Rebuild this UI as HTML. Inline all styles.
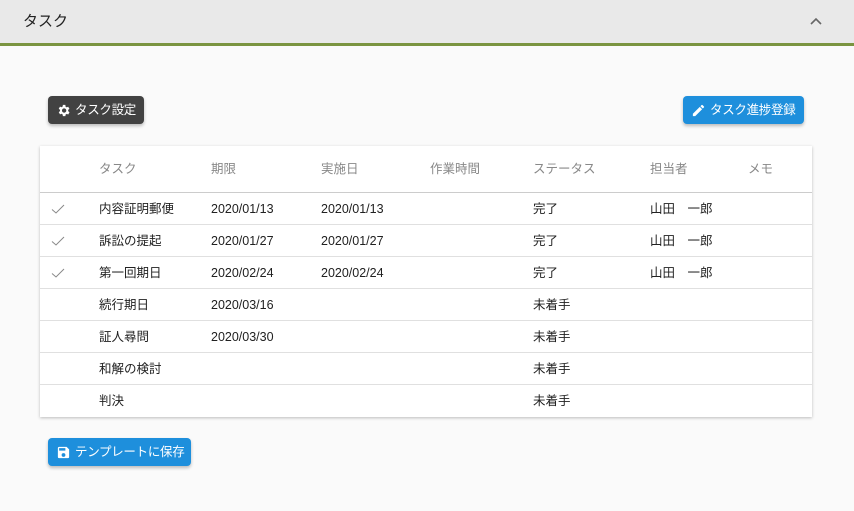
<!DOCTYPE html>
<html><head><meta charset="utf-8"><style>
*{margin:0;padding:0;box-sizing:border-box}
body{width:854px;height:511px;background:#fafafa;font-family:"Liberation Sans","Noto Sans CJK JP",sans-serif;position:relative;overflow:hidden;color:#212121}
.hdr{position:absolute;left:0;top:0;width:854px;height:46px;background:#e9e9e9;border-bottom:3px solid #7a9440}
.hdr .t{position:absolute;left:23px;top:13px;font-size:15px;line-height:18px;color:#222}
.hdr .c{position:absolute;left:809px;top:14px}
.btn{position:absolute;height:28px;border-radius:4px;color:#fff;font-size:12.5px;line-height:16px;white-space:nowrap;display:flex;align-items:center;padding-left:8px;box-shadow:0 2px 3px rgba(0,0,0,.25);letter-spacing:-0.3px}
.btn svg{margin-right:4px;flex:none}
.card{position:absolute;left:40px;top:146px;width:772px;height:271px;background:#fff;box-shadow:0 1px 3px rgba(0,0,0,.25)}
.row{position:absolute;left:0;width:772px;height:32px;border-bottom:1px solid #e0e0e0;font-size:12.5px}
.row span{position:absolute;top:8px;line-height:16px;height:16px;white-space:nowrap}
.row svg{position:absolute;left:11px;top:10px}
.head span{color:#888;top:15px}
</style></head><body>
<div class="hdr"><div class="t">タスク</div>
<svg class="c" width="14" height="14" viewBox="0 0 14 14"><path d="M2 10 L7 5 L12 10" fill="none" stroke="#666" stroke-width="1.6"/></svg></div>
<div class="btn" style="left:48px;top:96px;width:96px;background:#424242"><svg width="15" height="15" viewBox="0 0 24 24"><path fill="#fff" d="M19.4 13a7.5 7.5 0 000-2l2.1-1.6-2-3.5-2.5 1a7 7 0 00-1.7-1L15 3h-4l-.4 2.7a7 7 0 00-1.7 1l-2.5-1-2 3.5L6.5 11a7.5 7.5 0 000 2l-2.1 1.6 2 3.5 2.5-1a7 7 0 001.7 1L11 21h4l.4-2.7a7 7 0 001.7-1l2.5 1 2-3.5zM13 15.5a3.5 3.5 0 110-7 3.5 3.5 0 010 7z"/></svg>タスク設定</div>
<div class="btn" style="left:683px;top:96px;width:121px;background:#1e8fdc"><svg width="15" height="15" viewBox="0 0 24 24"><path fill="#fff" d="M3 17.25V21h3.75L17.8 9.94l-3.75-3.75zM20.7 7.04a1 1 0 000-1.41l-2.34-2.34a1 1 0 00-1.41 0l-1.83 1.83 3.75 3.75z"/></svg>タスク進捗登録</div>
<div class="card">
<div class="row head" style="top:0;height:47px;border-bottom-color:#ccc"><span style="left:59px">タスク</span><span style="left:171px">期限</span><span style="left:281px">実施日</span><span style="left:390px">作業時間</span><span style="left:493px">ステータス</span><span style="left:610px">担当者</span><span style="left:708px">メモ</span></div>
<div class="row" style="top:47px"><svg width="14" height="12" viewBox="0 0 14 12"><path d="M1 6.5 L5 10 L13 2" fill="none" stroke="#888" stroke-width="1"/></svg><span style="left:59px">内容証明郵便</span><span style="left:171px">2020/01/13</span><span style="left:281px">2020/01/13</span><span style="left:493px">完了</span><span style="left:610px">山田　一郎</span></div>
<div class="row" style="top:79px"><svg width="14" height="12" viewBox="0 0 14 12"><path d="M1 6.5 L5 10 L13 2" fill="none" stroke="#888" stroke-width="1"/></svg><span style="left:59px">訴訟の提起</span><span style="left:171px">2020/01/27</span><span style="left:281px">2020/01/27</span><span style="left:493px">完了</span><span style="left:610px">山田　一郎</span></div>
<div class="row" style="top:111px"><svg width="14" height="12" viewBox="0 0 14 12"><path d="M1 6.5 L5 10 L13 2" fill="none" stroke="#888" stroke-width="1"/></svg><span style="left:59px">第一回期日</span><span style="left:171px">2020/02/24</span><span style="left:281px">2020/02/24</span><span style="left:493px">完了</span><span style="left:610px">山田　一郎</span></div>
<div class="row" style="top:143px"><span style="left:59px">続行期日</span><span style="left:171px">2020/03/16</span><span style="left:493px">未着手</span></div>
<div class="row" style="top:175px"><span style="left:59px">証人尋問</span><span style="left:171px">2020/03/30</span><span style="left:493px">未着手</span></div>
<div class="row" style="top:207px"><span style="left:59px">和解の検討</span><span style="left:493px">未着手</span></div>
<div class="row" style="top:239px;border-bottom:none"><span style="left:59px">判決</span><span style="left:493px">未着手</span></div>
</div>
<div class="btn" style="left:48px;top:438px;width:143px;background:#1e8fdc"><svg width="15" height="15" viewBox="0 0 24 24"><path fill="#fff" d="M17 3H5a2 2 0 00-2 2v14a2 2 0 002 2h14a2 2 0 002-2V7zm-5 16a3 3 0 110-6 3 3 0 010 6zm3-10H5V5h10z"/></svg>テンプレートに保存</div>
</body></html>
